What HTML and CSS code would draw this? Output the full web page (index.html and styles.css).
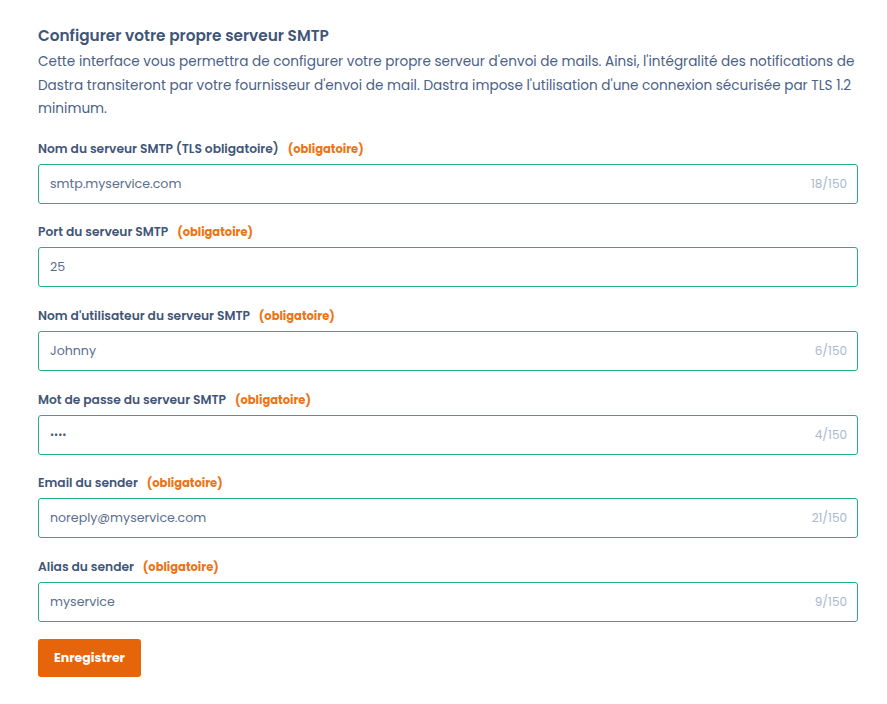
FILE: index.html
```html
<!DOCTYPE html>
<html lang="fr">
<head>
<meta charset="utf-8">
<link rel="stylesheet" href="styles.css">
</head>
<body>
<div class="page">
  <h1 class="title">Configurer votre propre serveur SMTP</h1>
  <p class="intro">Cette interface vous permettra de configurer votre propre serveur d'envoi de mails. Ainsi, l'intégralité des notifications de Dastra transiteront par votre fournisseur d'envoi de mail. Dastra impose l'utilisation d'une connexion sécurisée par TLS 1.2 minimum.</p>
  <div class="fields">
    <div class="field">
      <label class="label">Nom du serveur SMTP (TLS obligatoire) <span class="req">(obligatoire)</span></label>
      <div class="input"><span class="value">smtp.myservice.com</span><span class="count">18/150</span></div>
    </div>
    <div class="field">
      <label class="label">Port du serveur SMTP <span class="req">(obligatoire)</span></label>
      <div class="input"><span class="value">25</span></div>
    </div>
    <div class="field">
      <label class="label">Nom d'utilisateur du serveur SMTP <span class="req">(obligatoire)</span></label>
      <div class="input"><span class="value">Johnny</span><span class="count">6/150</span></div>
    </div>
    <div class="field">
      <label class="label">Mot de passe du serveur SMTP <span class="req">(obligatoire)</span></label>
      <div class="input"><span class="value dots">••••</span><span class="count">4/150</span></div>
    </div>
    <div class="field">
      <label class="label">Email du sender <span class="req">(obligatoire)</span></label>
      <div class="input"><span class="value">noreply@myservice.com</span><span class="count">21/150</span></div>
    </div>
    <div class="field">
      <label class="label">Alias du sender <span class="req">(obligatoire)</span></label>
      <div class="input"><span class="value">myservice</span><span class="count">9/150</span></div>
    </div>
  </div>
  <button class="btn">Enregistrer</button>
</div>
</body>
</html>
```
FILE: styles.css
```css
* { box-sizing: border-box; }
body {
  margin: 0;
  background: #fff;
  font-family: "Poppins", Inter, "Noto Sans", sans-serif;
}
.page {
  padding: 25px 0 0 38px;
  width: 858px;
}
.title {
  margin: 0;
  font-size: 15.3px;
  font-weight: 600;
  color: #3f5679;
  line-height: 22px;
}
.intro {
  margin: 3px 0 0;
  font-size: 13.6px;
  line-height: 23.6px;
  color: #4b6186;
}
.fields {
  margin-top: 20px;
  display: flex;
  flex-direction: column;
  gap: 20.6px;
}
.field {
  display: flex;
  flex-direction: column;
  gap: 7px;
}
.label {
  font-size: 12.25px;
  font-weight: 600;
  color: #3f5679;
  line-height: 16px;
}
.req {
  margin-left: 6px;
  font-size: 11.5px;
  font-weight: 700;
  color: #ec7414;
}
.input {
  height: 40px;
  border: 1px solid #27b07f;
  border-radius: 3px;
  display: flex;
  align-items: center;
  justify-content: space-between;
  padding: 0 10px 0 11px;
}
.value { color: #5b6e8e; font-size: 12.6px; }
.dots { font-size: 10px; color: #4b5d7e; }
.count { color: #a8b8d0; font-size: 12px; }
.btn {
  margin-top: 17px;
  width: 103px;
  height: 38px;
  border: none;
  border-radius: 3px;
  background: #e6640a;
  color: #fff;
  font-family: inherit;
  font-size: 12.5px;
  font-weight: 700;
}
```
